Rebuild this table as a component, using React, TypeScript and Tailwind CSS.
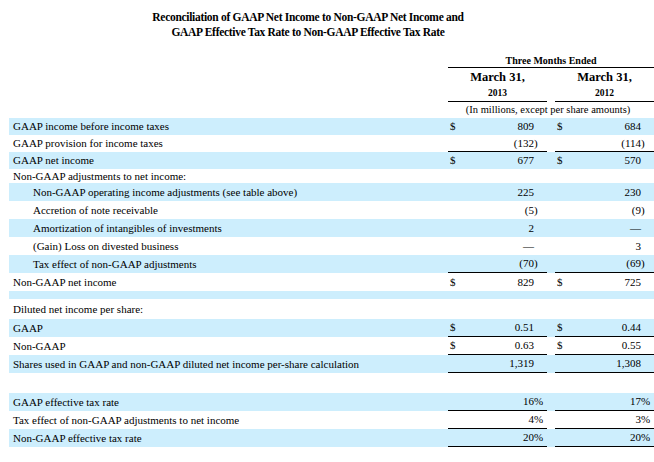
type Cell = { dollar?: boolean; v: string; s?: string };
type Row = {
  label: string;
  indent?: boolean;
  blue?: boolean;
  h: string;
  ul?: boolean;
  a?: Cell;
  b?: Cell;
};

const rows: Row[] = [
  { label: 'GAAP income before income taxes', blue: true, h: 'h-[17px]', a: { dollar: true, v: '809' }, b: { dollar: true, v: '684' } },
  { label: 'GAAP provision for income taxes', h: 'h-[17px]', ul: true, a: { v: '(132', s: ')' }, b: { v: '(114', s: ')' } },
  { label: 'GAAP net income', blue: true, h: 'h-[17px]', a: { dollar: true, v: '677' }, b: { dollar: true, v: '570' } },
  { label: 'Non-GAAP adjustments to net income:', h: 'h-[14px]' },
  { label: 'Non-GAAP operating income adjustments (see table above)', indent: true, blue: true, h: 'h-[18px]', a: { v: '225' }, b: { v: '230' } },
  { label: 'Accretion of note receivable', indent: true, h: 'h-[18px]', a: { v: '(5', s: ')' }, b: { v: '(9', s: ')' } },
  { label: 'Amortization of intangibles of investments', indent: true, blue: true, h: 'h-[18px]', a: { v: '2' }, b: { v: '—' } },
  { label: '(Gain) Loss on divested business', indent: true, h: 'h-[18px]', a: { v: '—' }, b: { v: '3' } },
  { label: 'Tax effect of non-GAAP adjustments', indent: true, blue: true, h: 'h-[18px]', ul: true, a: { v: '(70', s: ')' }, b: { v: '(69', s: ')' } },
  { label: 'Non-GAAP net income', h: 'h-[18px]', a: { dollar: true, v: '829' }, b: { dollar: true, v: '725' } },
  { label: '', blue: true, h: 'h-[8px]' },
  { label: 'Diluted net income per share:', h: 'h-[20px]' },
  { label: 'GAAP', blue: true, h: 'h-[18px]', ul: true, a: { dollar: true, v: '0.51' }, b: { dollar: true, v: '0.44' } },
  { label: 'Non-GAAP', h: 'h-[18px]', ul: true, a: { dollar: true, v: '0.63' }, b: { dollar: true, v: '0.55' } },
  { label: 'Shares used in GAAP and non-GAAP diluted net income per-share calculation', blue: true, h: 'h-[18px]', ul: true, a: { v: '1,319' }, b: { v: '1,308' } },
  { label: '', h: 'h-[20px]' },
  { label: 'GAAP effective tax rate', blue: true, h: 'h-[18px]', ul: true, a: { v: '16', s: '%' }, b: { v: '17', s: '%' } },
  { label: 'Tax effect of non-GAAP adjustments to net income', h: 'h-[18px]', ul: true, a: { v: '4', s: '%' }, b: { v: '3', s: '%' } },
  { label: 'Non-GAAP effective tax rate', blue: true, h: 'h-[18px]', ul: true, a: { v: '20', s: '%' }, b: { v: '20', s: '%' } },
];

function ValueCell({ c, ul }: { c?: Cell; ul?: boolean }) {
  return (
    <div className={`w-[99px] h-full flex items-center justify-between pl-[2px] pr-[8px] ${ul ? 'border-b border-black' : ''}`}>
      <span>{c?.dollar ? '$' : ''}</span>
      {c && (
        <span className="flex">
          <span>{c.v}</span>
          <span className="inline-block w-[5px] text-left">{c.s ?? ''}</span>
        </span>
      )}
    </div>
  );
}

export default function App() {
  return (
    <div className="w-[654px] h-[462px] bg-white text-black overflow-hidden" style={{ fontFamily: '"Liberation Serif", "Times New Roman", serif' }}>
      <div className="pt-[10px] w-[614px] pl-[2px] text-center font-bold text-[11.5px] leading-[15px] tracking-[-0.3px]">
        <div>Reconciliation of GAAP Net Income to Non-GAAP Net Income and</div>
        <div>GAAP Effective Tax Rate to Non-GAAP Effective Tax Rate</div>
      </div>

      <div className="mt-[14px] ml-[448px] w-[206px]">
        <div className="h-[14px] border-b border-black text-center font-bold text-[10px] leading-[13px]">Three Months Ended</div>
        <div className="flex gap-[8px]">
          <div className="w-[99px] border-b border-black text-center font-bold">
            <div className="text-[12.5px] leading-[17px] pt-[1px]">March 31,</div>
            <div className="text-[9.5px] leading-[15px]">2013</div>
          </div>
          <div className="w-[99px] border-b border-black text-center font-bold">
            <div className="text-[12.5px] leading-[17px] pt-[1px]">March 31,</div>
            <div className="text-[9.5px] leading-[15px]">2012</div>
          </div>
        </div>
        <div className="h-[16px] text-center text-[10.5px] leading-[16px] whitespace-nowrap -ml-[6px]">(In millions, except per share amounts)</div>
      </div>

      <div className="ml-[9px] text-[11px]">
        {rows.map((r, i) => (
          <div key={i} className={`flex items-center ${r.h} ${r.blue ? 'bg-[#cdeefd]' : ''}`}>
            <div className={`flex-1 whitespace-nowrap ${r.indent ? 'pl-[24px]' : 'pl-[4px]'}`}>{r.label}</div>
            {(r.a || r.b || r.ul) ? (
              <div className="flex gap-[8px] h-full">
                <ValueCell c={r.a} ul={r.ul} />
                <ValueCell c={r.b} ul={r.ul} />
              </div>
            ) : null}
          </div>
        ))}
      </div>
    </div>
  );
}
